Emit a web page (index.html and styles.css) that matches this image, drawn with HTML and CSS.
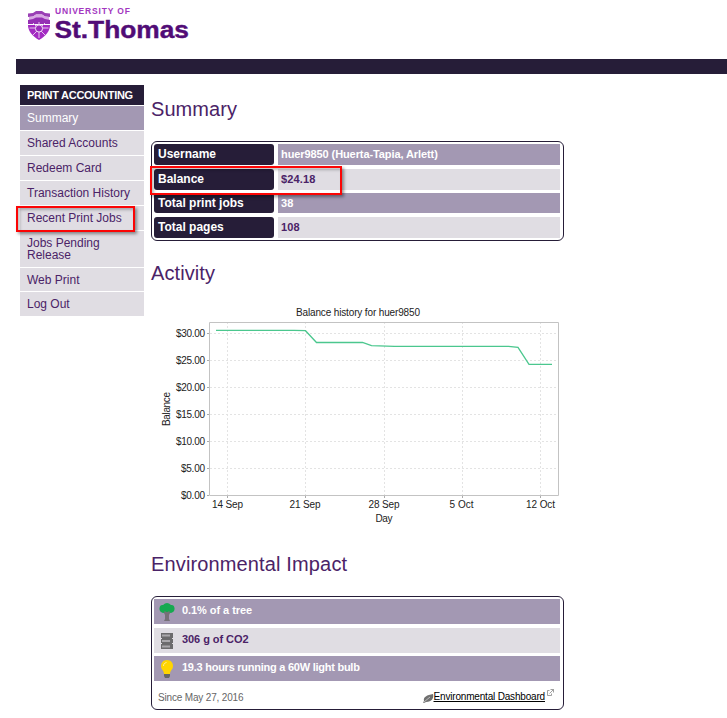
FILE: index.html
```html
<!DOCTYPE html>
<html lang="en">
<head>
<meta charset="utf-8">
<title>Print Accounting - Summary</title>
<link rel="stylesheet" href="styles.css">
</head>
<body>
<header class="header">
  <svg class="logo" width="170" height="40" viewBox="24 4 170 40" role="img">
    <path d="M28 13.500l5-.5 3-2h6l3 2 5 .5v3.500l-5-.5-3-2h-6l-3 2-5 .5z" fill="#9a3fb5"/>
    <path d="M29 17l4-.5 3-2h6l3 2 4 .5v3H29z" fill="#d9a9e4"/>
    <path d="M28 20l5-1 3-1.500h6l3 1.500 5 1v4H28z" fill="#9530b4"/>
    <path d="M28 25h22c0 6-4 11-11 15-7-4-11-9-11-15z" fill="#a32bc2"/>
    <path d="M39 22v16M29.500 28h19M33 23l12 12M45 23L33 35" stroke="#e6c4ee" stroke-width="1"/>
    <circle cx="39" cy="28.500" r="3.600" fill="#9a2dba" stroke="#f3e2f6"/>
    <text class="logo-top" x="55" y="14" textLength="75">UNIVERSITY OF</text>
    <text class="logo-name" x="54.5" y="38" textLength="134.5" lengthAdjust="spacingAndGlyphs">St.Thomas</text>
  </svg>
</header>
<div class="bar"></div>
<div class="layout">
  <nav class="nav">
    <div class="nav-title">PRINT ACCOUNTING</div>
    <a class="nav-item active">Summary</a>
    <a class="nav-item">Shared Accounts</a>
    <a class="nav-item">Redeem Card</a>
    <a class="nav-item">Transaction History</a>
    <a class="nav-item marked">Recent Print Jobs</a>
    <a class="nav-item tall">Jobs Pending Release</a>
    <a class="nav-item short">Web Print</a>
    <a class="nav-item last">Log Out</a>
  </nav>
  <main class="main">
    <h1 class="heading">Summary</h1>
    <div class="panel summary">
      <div class="key">Username</div><div class="value odd">huer9850 (Huerta-Tapia, Arlett)</div>
      <div class="key marked-balance">Balance</div><div class="value wide">$24.18</div>
      <div class="key">Total print jobs</div><div class="value odd wide">38</div>
      <div class="key">Total pages</div><div class="value wide">108</div>
    </div>
    <h1 class="heading activity">Activity</h1>
    <svg class="chart" width="413" height="231" viewBox="151 300 413 231">
      <path class="grid" d="M210 333.5h348M210 360.5h348M210 387.5h348M210 414.5h348M210 441.5h348M210 468.5h348M227.5 322v173M305.5 322v173M384.5 322v173M462.5 322v173M540.5 322v173"/>
      <path class="frame" d="M209.5 322.5h349v173h-349z"/>
      <path class="tick" d="M207 333.5h2M207 360.5h2M207 387.5h2M207 414.5h2M207 441.5h2M207 468.5h2M207 495.5h2M227.5 496v2M305.5 496v2M384.5 496v2M462.5 496v2M540.5 496v2"/>
      <path class="series" d="M216 330.4h78l11.500.3 11 11.800h46l9 3.200 23 .6h114l9.500 1.100 11 16.900h23"/>
      <g class="labels">
        <text x="296" y="316" textLength="124">Balance history for huer9850</text>
        <text x="176" y="337" textLength="29">$30.00</text>
        <text x="176" y="364" textLength="29">$25.00</text>
        <text x="176" y="391" textLength="29">$20.00</text>
        <text x="176" y="418" textLength="29">$15.00</text>
        <text x="176" y="445" textLength="29">$10.00</text>
        <text x="181" y="472" textLength="24">$5.00</text>
        <text x="181" y="499" textLength="24">$0.00</text>
        <text x="212" y="508" textLength="31">14 Sep</text>
        <text x="289.500" y="508" textLength="31">21 Sep</text>
        <text x="368.500" y="508" textLength="31">28 Sep</text>
        <text x="449.500" y="508" textLength="24">5 Oct</text>
        <text x="526" y="508" textLength="29">12 Oct</text>
        <text x="375.500" y="522" textLength="17">Day</text>
        <text transform="translate(170 426) rotate(-90)" textLength="34">Balance</text>
      </g>
    </svg>
    <h1 class="heading impact">Environmental Impact</h1>
    <div class="panel environment">
      <div class="env-row odd">
        <svg width="18" height="20" viewBox="0 0 18 20"><path d="M7 10h4l2-1-2 4v4l1 2H6l1-2v-4L5 9z" fill="#767078"/><path d="M5 3q4-4 8 0 3-.5 3.500 3 .5 4-3.500 5l-2-.5-2 1-2-1-2 .5q-4-1-3.500-5Q2 2.500 5 3z" fill="#16a950"/><path d="M9 10v5M6.500 9.500L9 12l2.500-2.500" fill="none" stroke="#767078" stroke-width="1.500"/></svg>
        <span class="env-text">0.1% of a tree</span>
      </div>
      <div class="env-row">
        <svg width="18" height="20" viewBox="0 0 18 20"><path d="M3 2h12v5H3zM4 7h10v1H4zM3 8h12v4H3zM4 12h10v1H4zM3 13h12v5H3z" fill="#6c6b6d"/><path d="M4 4.500h8M4 10h8M4 15.500h8" stroke="#aaa8ac" stroke-width="2"/></svg>
        <span class="env-text">306 g of CO2</span>
      </div>
      <div class="env-row odd">
        <svg width="18" height="20" viewBox="0 0 18 20"><path d="M9 1c4 0 6 3 6 6 0 4-3 4-3 8H6c0-4-3-4-3-8 0-3 2-6 6-6z" fill="#ffd500"/><path d="M5.500 7c0-2 1-3 3-3.500" fill="none" stroke="#fff09a"/><path d="M6 15h6v2l-1 2H7l-1-2z" fill="#666"/></svg>
        <span class="env-text bulb">19.3 hours running a 60W light bulb</span>
      </div>
      <div class="env-footer">
        <span class="since">Since May 27, 2016</span>
        <span class="dash">
          <svg width="11" height="11" viewBox="0 0 11 11"><path d="M1 8C0 4 4 2 10 1c1 4-1 8-7 8l-2 1-1-.5z" fill="#707070"/><path d="M1 9l6-5" stroke="#ddd" stroke-width=".7"/></svg><a class="dash-link">Environmental Dashboard</a>
          <svg class="external" width="7" height="7" viewBox="0 0 7 7"><path d="M2.500 1.500h-2v5h4v-2M3.500.5h3v3M6.500.5L2.500 4.500" fill="none" stroke="#888" stroke-width=".8"/></svg>
        </span>
      </div>
    </div>
  </main>
</div>
</body>
</html>
```
FILE: styles.css
```css
*, *::after { box-sizing: border-box; }
body { margin: 0; height: 718px; overflow: hidden; background: #fff; color: #4b2367; font-family: "Liberation Sans", Arial, sans-serif; font-size: 12px; }
.header { height: 59px; padding: 4px 0 0 24px; }
.logo { display: block; }
.logo-top { font-size: 8.5px; font-weight: bold; fill: #a337bf; }
.logo-name { font-size: 24px; font-weight: bold; fill: #510c76; stroke: #510c76; stroke-width: .4px; }
.bar { height: 15px; margin-left: 16px; background: #261d38; }
.layout { display: flex; padding-left: 20px; }
.nav { display: flex; flex-direction: column; gap: 1px; width: 124px; margin-top: 11px; }
.nav-title { height: 20px; padding-left: 7px; background: #261d38; color: #fff; font-size: 11px; font-weight: bold; line-height: 21px; letter-spacing: -.27px; white-space: nowrap; }
.nav-item { height: 24px; padding: 6px 10px 0 7px; background: #e0dde3; line-height: 12px; white-space: nowrap; }
.nav-item.active { background: #a398b3; color: #fff; }
.nav-item.tall { height: 36px; white-space: normal; }
.nav-item.short { height: 23px; }
.marked, .marked-balance { position: relative; }
.marked::after, .marked-balance::after { content: ""; position: absolute; z-index: 2; border: 2px solid #fb0505; box-shadow: 2px 2px 3px rgba(0, 0, 0, .4), inset 2px 2px 3px rgba(0, 0, 0, .25); }
.marked::after { left: -4px; top: 0; width: 119px; height: 26px; }
.marked-balance::after { left: -4px; top: -3px; width: 192px; height: 29px; }
.main { width: 413px; margin-left: 7px; }
.heading { margin: 23px 0 0; height: 24px; font-size: 20px; font-weight: normal; line-height: 24px; letter-spacing: .08px; }
.panel { border: 1px solid #261d38; border-radius: 6px; background: #fff; }
.summary { display: grid; grid-template-columns: 120px 282px; grid-template-rows: 21px 21px 20px 21px; column-gap: 4px; row-gap: 3.5px; height: 100px; margin-top: 20px; padding: 2px; }
.key { padding-left: 4px; border-radius: 3px; background: #261d38; color: #fff; font-weight: bold; line-height: 20px; }
.value { padding-left: 3px; background: #e0dde3; font-size: 11px; font-weight: bold; line-height: 21px; letter-spacing: -.09px; }
.wide { line-height: 20px; letter-spacing: .15px; }
.odd { background: #a398b3; color: #fff; }
.activity { margin-top: 20px; }
.chart { display: block; margin-top: 15px; }
.chart path { fill: none; }
.chart .grid { stroke: #e3e3e3; stroke-dasharray: 2 2; }
.chart .frame { stroke: #c3c3c3; }
.chart .tick { stroke: #aaa; }
.chart .series { stroke: #4bc78e; stroke-width: 1.3; }
.labels { fill: #222; font-size: 10px; }
.impact { margin-top: 21px; letter-spacing: .14px; }
.environment { height: 114px; margin-top: 20px; padding: 2px; display: flex; flex-direction: column; }
.env-row { display: flex; align-items: center; gap: 6px; height: 25px; margin: 0 1px 4px 0; padding-left: 4px; background: #e0dde3; font-size: 11px; font-weight: bold; }
.env-row.odd { background: #a398b3; }
.env-row:nth-child(2) { margin-bottom: 3px; }
.env-text { margin-top: -3px; letter-spacing: -.06px; }
.bulb { letter-spacing: -.25px; }
.env-footer { display: flex; justify-content: space-between; padding: 6px 7px 0 4px; font-size: 10px; line-height: 12px; }
.since { margin-top: 1px; color: #666; letter-spacing: -.17px; }
.dash { display: flex; align-items: flex-start; color: #000; letter-spacing: -.18px; }
.dash > svg:first-child { margin-top: 2px; }
.dash-link { text-decoration: underline; }
.external { margin-top: -2px; margin-left: 2px; }
```
